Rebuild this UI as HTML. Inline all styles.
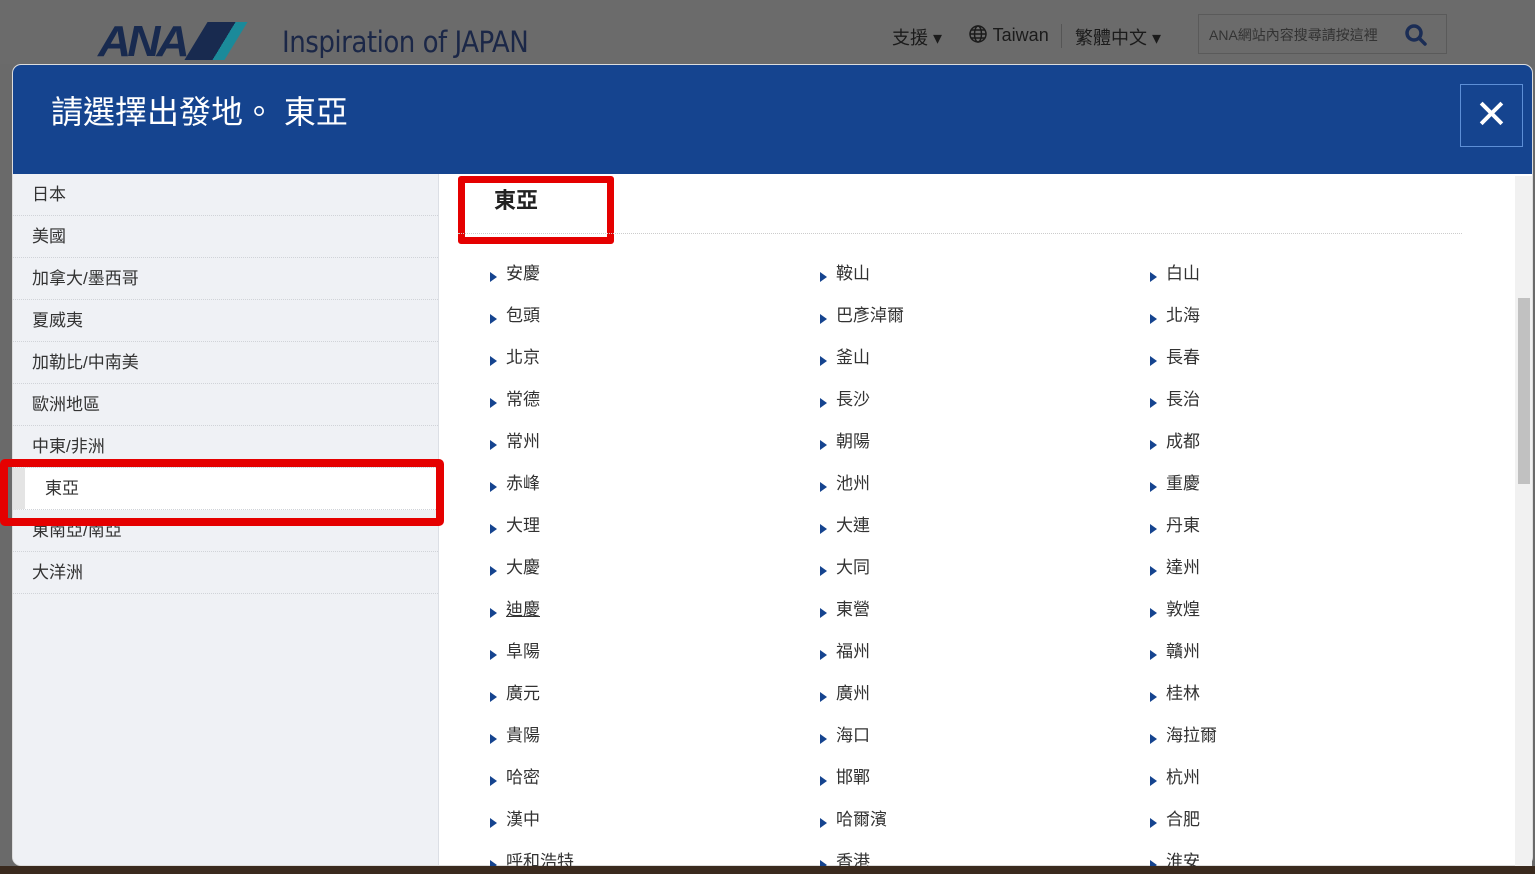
<!DOCTYPE html>
<html><head><meta charset="utf-8"><style>
*{margin:0;padding:0;box-sizing:border-box}
body{width:1535px;height:874px;overflow:hidden;background:#6a6a6a;font-family:"Liberation Sans","Noto Sans CJK TC",sans-serif;position:relative}
.top{position:absolute;left:0;top:0;width:1535px;height:64px;background:#6b6b6b}
.logo{position:absolute;left:98px;top:14px;font:italic bold 46px "Liberation Sans",sans-serif;color:#182a4f;letter-spacing:-4px;transform:scaleY(0.95)}
.insp{position:absolute;left:282px;top:25px;font-size:29px;color:#1b2747;letter-spacing:-0.5px;font-family:"DejaVu Sans Condensed","Liberation Sans",sans-serif}
.nav{position:absolute;top:24px;font-size:18px;color:#1b1b1b}
.search{position:absolute;left:1198px;top:14px;width:249px;height:40px;border:1px solid #5a5a5a;font-size:14px;color:#333;padding:10px 0 0 10px}
.bottom{position:absolute;left:0;top:866px;width:1535px;height:8px;background:#3a2a1e}
.modal{position:absolute;left:12px;top:64px;width:1521px;height:802px;background:#fff;border-radius:9px;overflow:hidden;border:1px solid #ddd}
.hdr{height:109px;background:#15448f;color:#fff;font-size:32px;padding:22px 0 0 38px}
.close{position:absolute;right:9px;top:19px;width:63px;height:63px;border:1px solid #5d8fd6;color:#fff;font-size:40px;text-align:center;line-height:60px}
.side{position:absolute;left:0;top:109px;width:426px;height:700px;background:#eff1f5;border-right:1px solid #dcdfe5}
.side div{height:42px;border-bottom:1px dotted #d0d3d8;font-size:17px;color:#333;padding:6px 0 0 19px}
.side div.sel{background:#fff;padding-left:20px;border-left:12px solid #e4e4e4}
.red1{position:absolute;left:0;top:459px;width:444px;height:67px;border:8px solid #e50000;border-radius:5px}
.red2{position:absolute;left:458px;top:176px;width:156px;height:68px;border:7px solid #e50000;border-radius:3px}
.h2{position:absolute;left:494px;top:183px;font-size:22px;font-weight:bold;color:#222}
.line{position:absolute;left:458px;top:233px;width:1004px;border-top:1px dotted #ccc}
.it{position:absolute;font-size:17px;color:#333;margin-top:-4px}
.it:before{content:"";display:inline-block;border-left:7px solid #15448f;border-top:5px solid transparent;border-bottom:5px solid transparent;margin-right:9px;vertical-align:-3px}
.sb{position:absolute;left:1515px;top:176px;width:17px;height:690px;background:#f1f1f1}
.thumb{position:absolute;left:1518px;top:298px;width:12px;height:186px;background:#c1c1c1}
</style></head><body>
<div class="top"></div>
<div class="logo">ANA<span style="display:inline-block;width:40px;height:40px;background:linear-gradient(90deg,#182a4f 70%,#1b8a9a 70%);transform:skewX(-30deg);margin-left:10px;vertical-align:-4px"></span></div>
<div class="insp">Inspiration of JAPAN</div>
<div class="nav" style="left:892px">支援 ▾</div>
<div class="nav" style="left:968px"><svg width="20" height="20" viewBox="0 0 20 20" style="vertical-align:-3px" fill="none" stroke="#1b1b1b" stroke-width="1.5"><circle cx="10" cy="10" r="8"/><ellipse cx="10" cy="10" rx="3.5" ry="8"/><path d="M2 10h16M3.5 6h13M3.5 14h13"/></svg> Taiwan</div>
<div style="position:absolute;left:1061px;top:24px;height:24px;border-left:1px solid #555"></div>
<div class="nav" style="left:1075px">繁體中文 ▾</div>
<div class="search">ANA網站內容搜尋請按這裡<svg style="position:absolute;right:18px;top:8px" width="24" height="24" viewBox="0 0 24 24" fill="none" stroke="#1b2d55" stroke-width="3.5"><circle cx="10" cy="10" r="7"/><path d="M15 15l6 6" stroke-linecap="round"/></svg></div>
<div class="bottom"></div>
<div class="modal">
<div class="hdr">請選擇出發地。 東亞</div>
<div class="close">✕</div>
<div class="side">
<div>日本</div><div>美國</div><div>加拿大/墨西哥</div><div>夏威夷</div><div>加勒比/中南美</div><div>歐洲地區</div><div>中東/非洲</div><div class="sel">東亞</div><div>東南亞/南亞</div><div>大洋洲</div>
</div>
</div>
<div class="red1"></div>
<div class="h2">東亞</div>
<div class="red2"></div>
<div class="line"></div>
<div class="sb"></div><div class="thumb"></div>
<div class="it" style="left:490px;top:263px">安慶</div><div class="it" style="left:820px;top:263px">鞍山</div><div class="it" style="left:1150px;top:263px">白山</div>
<div class="it" style="left:490px;top:305px">包頭</div><div class="it" style="left:820px;top:305px">巴彥淖爾</div><div class="it" style="left:1150px;top:305px">北海</div>
<div class="it" style="left:490px;top:347px">北京</div><div class="it" style="left:820px;top:347px">釜山</div><div class="it" style="left:1150px;top:347px">長春</div>
<div class="it" style="left:490px;top:389px">常德</div><div class="it" style="left:820px;top:389px">長沙</div><div class="it" style="left:1150px;top:389px">長治</div>
<div class="it" style="left:490px;top:431px">常州</div><div class="it" style="left:820px;top:431px">朝陽</div><div class="it" style="left:1150px;top:431px">成都</div>
<div class="it" style="left:490px;top:473px">赤峰</div><div class="it" style="left:820px;top:473px">池州</div><div class="it" style="left:1150px;top:473px">重慶</div>
<div class="it" style="left:490px;top:515px">大理</div><div class="it" style="left:820px;top:515px">大連</div><div class="it" style="left:1150px;top:515px">丹東</div>
<div class="it" style="left:490px;top:557px">大慶</div><div class="it" style="left:820px;top:557px">大同</div><div class="it" style="left:1150px;top:557px">達州</div>
<div class="it" style="left:490px;top:599px"><u>迪慶</u></div><div class="it" style="left:820px;top:599px">東營</div><div class="it" style="left:1150px;top:599px">敦煌</div>
<div class="it" style="left:490px;top:641px">阜陽</div><div class="it" style="left:820px;top:641px">福州</div><div class="it" style="left:1150px;top:641px">贛州</div>
<div class="it" style="left:490px;top:683px">廣元</div><div class="it" style="left:820px;top:683px">廣州</div><div class="it" style="left:1150px;top:683px">桂林</div>
<div class="it" style="left:490px;top:725px">貴陽</div><div class="it" style="left:820px;top:725px">海口</div><div class="it" style="left:1150px;top:725px">海拉爾</div>
<div class="it" style="left:490px;top:767px">哈密</div><div class="it" style="left:820px;top:767px">邯鄲</div><div class="it" style="left:1150px;top:767px">杭州</div>
<div class="it" style="left:490px;top:809px">漢中</div><div class="it" style="left:820px;top:809px">哈爾濱</div><div class="it" style="left:1150px;top:809px">合肥</div>
<div style="position:absolute;left:440px;top:849px;width:1075px;height:17px;overflow:hidden">
<div class="it" style="left:50px;top:2px">呼和浩特</div><div class="it" style="left:380px;top:2px">香港</div><div class="it" style="left:710px;top:2px">淮安</div>
</div>
</body></html>
